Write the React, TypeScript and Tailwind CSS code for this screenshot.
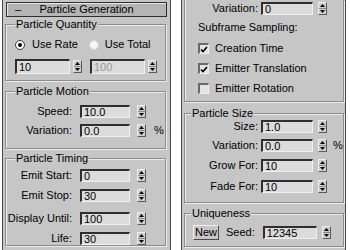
import React from 'react';

// sunken numeric field
const Field = ({value, w, h = 'h-[13px]', dim}: {value: string; w: string; h?: string; dim?: boolean}) => (
    <div
        className={`flex ${h} ${w} items-center border-t-2 border-l-2 border-r border-b border-t-[#2e2e2e] border-l-[#2e2e2e] border-r-[#f0f0f0] border-b-[#f0f0f0] bg-[#dcdcdc] pl-[2px] leading-[11px] ${dim ? 'text-[#9a9a9a]' : 'text-black'}`}
    >
        {value}
    </div>
);

const Spinner = () => (
    <div className="flex h-[13px] w-[9px] flex-col border border-t-[#eeeeee] border-l-[#eeeeee] border-r-[#5a5a5a] border-b-[#5a5a5a] bg-[#cfcfcf]">
        <div className="flex flex-1 items-center justify-center">
            <svg width="5" height="3" viewBox="0 0 5 3"><path d="M2.5 0L5 3H0z" fill="#000"/></svg>
        </div>
        <div className="h-px bg-[#8a8a8a]"/>
        <div className="flex flex-1 items-center justify-center">
            <svg width="5" height="3" viewBox="0 0 5 3"><path d="M0 0H5L2.5 3z" fill="#000"/></svg>
        </div>
    </div>
);

const Radio = ({on}: {on?: boolean}) => (
    <div
        className={`flex h-[10px] w-[10px] items-center justify-center rounded-full border ${on ? 'border-[#3a3a3a] bg-white' : 'border-[#d0d0d0] bg-[#f6f6f6]'}`}
    >
        {on && <div className="h-[4px] w-[4px] rounded-full bg-black"/>}
    </div>
);

const Check = ({on}: {on?: boolean}) => (
    <div className="flex h-[11px] w-[11px] items-center justify-center border-t-2 border-l-2 border-r border-b border-t-[#6a6a6a] border-l-[#6a6a6a] border-r-[#f0f0f0] border-b-[#f0f0f0] bg-[#e4e4e4]">
        {on && (
            <svg width="8" height="7" viewBox="0 0 8 7">
                <path d="M1 3.5L3 5.5L7 1" stroke="#000" strokeWidth="1.6" fill="none"/>
            </svg>
        )}
    </div>
);

// left panel label/field row
const LRow = ({label, value, pct, mt = ''}: {label: string; value: string; pct?: boolean; mt?: string}) => (
    <div className={`flex h-[13px] items-center ${mt}`}>
        <span className="w-[67px] pr-[1px] text-right">{label}</span>
        <div className="ml-[7px]"><Field value={value} w="w-[50px]"/></div>
        <div className="ml-[7px]"><Spinner/></div>
        {pct && <span className="ml-[8px]">%</span>}
    </div>
);

// right panel label/field row
const RRow = ({label, value, pct, mt = ''}: {label: string; value: string; pct?: boolean; mt?: string}) => (
    <div className={`flex h-[13px] items-center ${mt}`}>
        <span className="w-[73px] text-right">{label}</span>
        <div className="ml-[3px]"><Field value={value} w="w-[52px]"/></div>
        <div className="ml-[5px]"><Spinner/></div>
        {pct && <span className="ml-[6px]">%</span>}
    </div>
);

const groupCls = 'border border-[#8c8c8c] shadow-[inset_1px_1px_0_#ececec,1px_1px_0_#ececec]';

export default function App() {
    return (
        <div className="flex h-[250px] w-[350px] overflow-hidden bg-white font-['Liberation_Sans',Arial,sans-serif] text-[11px] leading-[13px] text-black">
            {/* left panel */}
            <div className="ml-[2px] flex w-[169px] flex-col border-x border-[#4a4a4a] bg-[#c6c6c6] pt-[2px]">
                <div className="mx-[3px] flex h-[15px] items-center border border-[#2e2e2e] bg-[#b4b4b4] shadow-[inset_1px_1px_0_#e6e6e6]">
                    <span className="w-[22px] pl-[8px]">–</span>
                    <span className="flex-1 pr-[22px] text-center">Particle Generation</span>
                </div>

                <fieldset className={`ml-[2px] mr-[4px] mt-[1px] pb-[6px] ${groupCls}`}>
                    <legend className="ml-[9px] bg-[#c6c6c6] px-[1px]">Particle Quantity</legend>
                    <div className="mt-[7px] flex h-[13px] items-center pl-[9px]">
                        <Radio on/>
                        <span className="ml-[7px]">Use Rate</span>
                        <div className="ml-[11px]"><Radio/></div>
                        <span className="ml-[6px]">Use Total</span>
                    </div>
                    <div className="mt-[8px] flex items-center pl-[9px]">
                        <Field value="10" w="w-[55px]" h="h-[15px]"/>
                        <div className="ml-[3px]"><Spinner/></div>
                        <div className="ml-[8px]"><Field value="100" w="w-[55px]" h="h-[15px]" dim/></div>
                        <div className="ml-[3px]"><Spinner/></div>
                    </div>
                </fieldset>

                <fieldset className={`ml-[2px] mr-[4px] mt-[4px] flex flex-col gap-[6px] pb-[11px] pt-[7px] ${groupCls}`}>
                    <legend className="ml-[9px] bg-[#c6c6c6] px-[1px]">Particle Motion</legend>
                    <LRow label="Speed:" value="10.0"/>
                    <LRow label="Variation:" value="0.0" pct/>
                </fieldset>

                <fieldset className={`ml-[2px] mr-[4px] mt-[3px] flex flex-col pt-[4px] ${groupCls}`}>
                    <legend className="ml-[9px] bg-[#c6c6c6] px-[1px]">Particle Timing</legend>
                    <LRow label="Emit Start:" value="0"/>
                    <LRow label="Emit Stop:" value="30" mt="mt-[7px]"/>
                    <LRow label="Display Until:" value="100" mt="mt-[10px]"/>
                    <LRow label="Life:" value="30" mt="mt-[7px]"/>
                </fieldset>
            </div>

            {/* right panel */}
            <div className="ml-[10px] flex w-[165px] flex-col border-x border-[#4a4a4a] bg-[#c6c6c6]">
                <div className="ml-[2px] mr-[1px] border-x border-b border-[#8c8c8c] pt-[2px] pb-[6px] shadow-[inset_1px_0_0_#ececec,1px_1px_0_#ececec]">
                    <RRow label="Variation:" value="0"/>
                    <div className="mt-[6px] pl-[13px]">Subframe Sampling:</div>
                    <div className="mt-[8px] flex flex-col gap-[7px] pl-[13px]">
                        <div className="flex h-[13px] items-center"><Check on/><span className="ml-[6px]">Creation Time</span></div>
                        <div className="flex h-[13px] items-center"><Check on/><span className="ml-[6px]">Emitter Translation</span></div>
                        <div className="flex h-[13px] items-center"><Check/><span className="ml-[6px]">Emitter Rotation</span></div>
                    </div>
                </div>

                <fieldset className={`ml-[2px] mr-[1px] mt-[5px] flex flex-col pb-[9px] ${groupCls}`}>
                    <legend className="ml-[6px] bg-[#c6c6c6] px-[1px]">Particle Size</legend>
                    <RRow label="Size:" value="1.0"/>
                    <RRow label="Variation:" value="0.0" pct mt="mt-[6px]"/>
                    <RRow label="Grow For:" value="10" mt="mt-[7px]"/>
                    <RRow label="Fade For:" value="10" mt="mt-[8px]"/>
                </fieldset>

                <fieldset className={`ml-[2px] mr-[1px] mt-[4px] pb-[6px] pt-[5px] ${groupCls}`}>
                    <legend className="ml-[6px] bg-[#c6c6c6] px-[1px]">Uniqueness</legend>
                    <div className="flex items-center pl-[8px]">
                        <div className="flex h-[15px] w-[26px] items-center justify-center border border-t-[#f0f0f0] border-l-[#f0f0f0] border-r-[#4a4a4a] border-b-[#4a4a4a] bg-[#c6c6c6]">New</div>
                        <span className="ml-[7px]">Seed:</span>
                        <div className="ml-[8px]"><Field value="12345" w="w-[54px]"/></div>
                        <div className="ml-[5px]"><Spinner/></div>
                    </div>
                </fieldset>
            </div>
        </div>
    );
}
